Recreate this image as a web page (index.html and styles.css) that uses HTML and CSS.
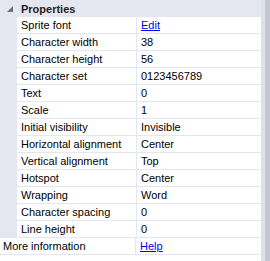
FILE: index.html
```html
<!DOCTYPE html>
<html lang="en">

<head>
    <meta charset="UTF-8">
    <title>Properties</title>
    <link rel="stylesheet" href="styles.css">
</head>

<body>
    <div class="window">
        <div class="grid">
            <div class="category">
                <span class="toggle"></span>
                <span class="category-name">Properties</span>
            </div>
            <div class="group">
                <div class="row"><div class="name">Sprite font</div><div class="value"><a href="#">Edit</a></div></div>
                <div class="row"><div class="name">Character width</div><div class="value">38</div></div>
                <div class="row"><div class="name">Character height</div><div class="value">56</div></div>
                <div class="row"><div class="name">Character set</div><div class="value">0123456789</div></div>
                <div class="row"><div class="name">Text</div><div class="value">0</div></div>
                <div class="row"><div class="name">Scale</div><div class="value">1</div></div>
                <div class="row"><div class="name">Initial visibility</div><div class="value">Invisible</div></div>
                <div class="row"><div class="name">Horizontal alignment</div><div class="value">Center</div></div>
                <div class="row"><div class="name">Vertical alignment</div><div class="value">Top</div></div>
                <div class="row"><div class="name">Hotspot</div><div class="value">Center</div></div>
                <div class="row"><div class="name">Wrapping</div><div class="value">Word</div></div>
                <div class="row"><div class="name">Character spacing</div><div class="value">0</div></div>
                <div class="row"><div class="name">Line height</div><div class="value">0</div></div>
            </div>
            <div class="row row-top">
                <div class="name">More information</div>
                <div class="value"><a href="#">Help</a></div>
            </div>
        </div>
        <div class="scrollbar">
            <div class="track"></div>
            <div class="thumb"></div>
        </div>
    </div>
</body>

</html>
```

FILE: styles.css
```css
body {
    margin: 0;
    padding: 0;
    background-color: white;
    font-family: 'Liberation Sans', Arial, sans-serif;
    font-size: 11px;
    color: black;
}

.window {
    display: flex;
    width: 270px;
    height: 261px;
    overflow: hidden;
}

.grid {
    width: 261px;
    background-color: white;
}

.category {
    display: flex;
    align-items: center;
    height: 17px;
    background-color: #e4e7f0;
}

.toggle {
    width: 0;
    height: 0;
    margin-left: 7px;
    margin-right: 8px;
    border-left: 6px solid transparent;
    border-bottom: 6px solid #6d6f75;
}

.category-name {
    font-weight: bold;
    font-size: 11px;
    color: #1e1e1e;
}

.group {
    padding-left: 17px;
    background-color: #e4e7f0;
}

.row {
    display: flex;
    height: 16px;
    line-height: 16px;
    background-color: white;
    border-bottom: 1px solid #e4e7f0;
}

.name {
    width: 115px;
    padding-left: 4px;
    border-right: 1px solid #e4e7f0;
    white-space: nowrap;
    overflow: hidden;
}

.value {
    flex: 1;
    padding-left: 4px;
    white-space: nowrap;
}

/* the last row sits outside the category, so its name column is wider */
.row-top .name {
    width: 132px;
    padding-left: 3px;
}

.value a {
    color: #0000ff;
    text-decoration: underline;
}

.scrollbar {
    display: flex;
    flex: 1;
}

.track {
    width: 4px;
    background-color: #dee1ea;
}

.thumb {
    flex: 1;
    background-color: #c3c7d1;
}
```
